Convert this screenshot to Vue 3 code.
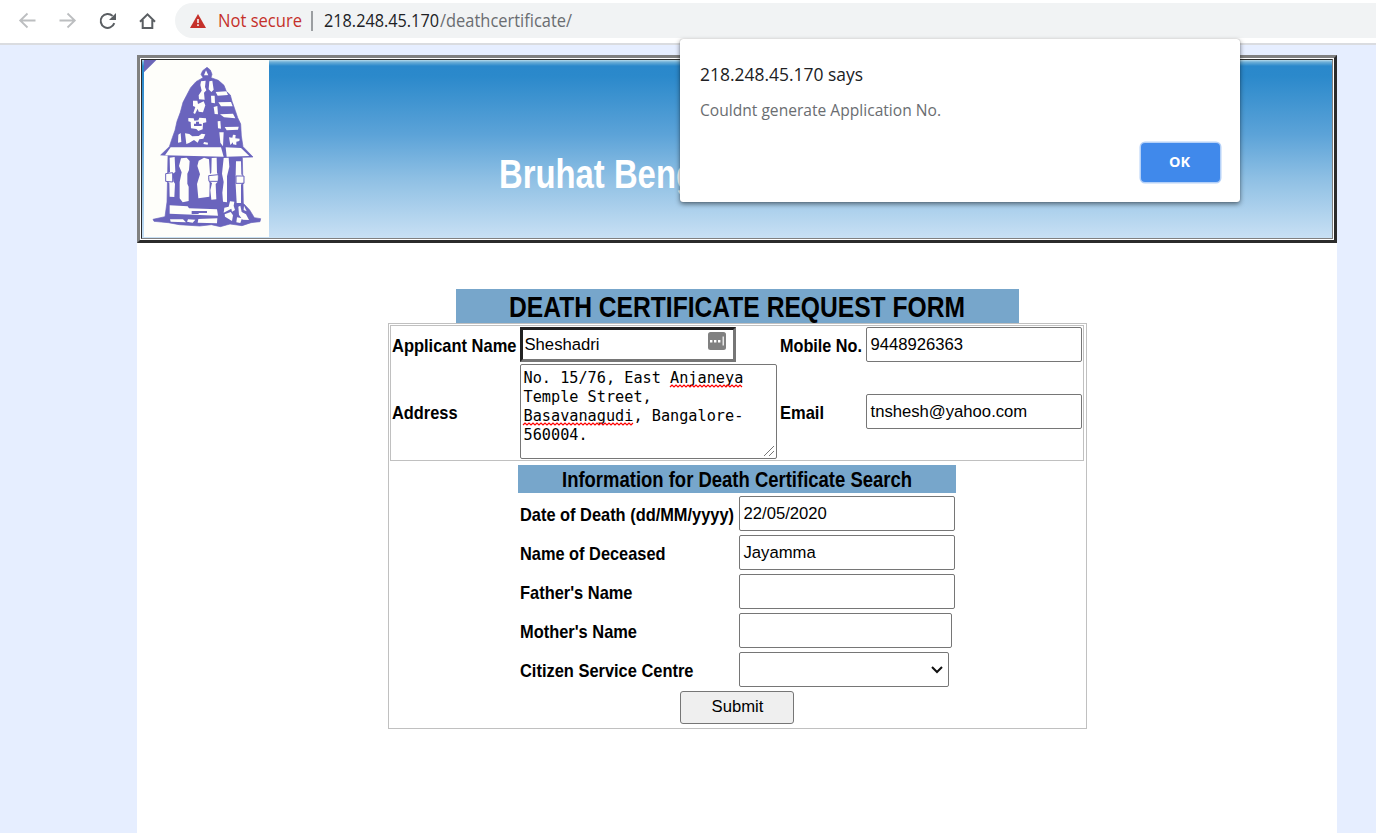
<script setup>
import { h } from 'vue'

// One line of text fitted to a fixed advance width; k condenses the glyphs.
const Fit = (props) => {
  const k = props.k || 1
  return h('svg', { width: props.w, height: props.ht }, [
    h('text', {
      x: 0,
      y: props.y,
      fill: 'currentColor',
      transform: `scale(${k} 1)`,
      textLength: props.w / k,
      lengthAdjust: 'spacingAndGlyphs',
    }, props.t),
  ])
}
Fit.props = ['t', 'w', 'ht', 'y', 'k']

const zigzag = (x, y, w) => {
  let d = `M${x} ${y}`
  for (let i = 2, up = true; i <= w; i += 2, up = !up) d += ` L${x + i} ${up ? y - 2 : y}`
  return d
}

const addressLines = [
  { t: 'No. 15/76, East Anjaneya', y: 18 },
  { t: 'Temple Street,', y: 37 },
  { t: 'Basavanagudi, Bangalore-', y: 56 },
  { t: '560004.', y: 75 },
]

const rows = [
  { label: 'Date of Death (dd/MM/yyyy)', w: 214, value: '22/05/2020', cls: '' },
  { label: 'Name of Deceased', w: 145.5, value: 'Jayamma', cls: '' },
  { label: "Father's Name", w: 112.5, value: '', cls: '' },
  { label: "Mother's Name", w: 117, value: '', cls: 'mother' },
]
</script>

<template>
  <div class="screen">
    <header class="toolbar">
      <nav class="nav">
        <svg class="faded" width="20" height="20" viewBox="0 0 20 20"><path d="M18.5 9.5H3M10.5 2.5L3.2 9.5L10.5 16.5" /></svg>
        <svg class="faded" width="20" height="20" viewBox="0 0 20 20"><path d="M2.5 9.5H17.5M10.5 2.5L17.8 9.5L10.5 16.5" /></svg>
        <svg width="20" height="20" viewBox="0 0 20 20"><path d="M17.3 12.2A7 7 0 1 1 15.6 4.9" /><path class="solid" d="M19 2V9H12Z" /></svg>
        <svg width="20" height="20" viewBox="0 0 20 20"><path d="M3 10.7L10.5 3.4L18 10.7M5.7 9V17H15.3V9" /></svg>
      </nav>
      <div class="omnibox">
        <svg class="warn" width="16" height="14" viewBox="0 0 16 14"><path fill="#c5302a" d="M8 0L16 14H0Z" /><path fill="#f1f3f4" d="M7.2 5H8.8V9H7.2ZM7.2 10.3H8.8V12H7.2Z" /></svg>
        <Fit class="ui url insecure" t="Not secure" :w="84" :ht="35" :y="24" />
        <span class="divider"></span>
        <Fit class="ui url host" t="218.248.45.170" :w="115" :ht="35" :y="24" />
        <Fit class="ui url path" t="/deathcertificate/" :w="132" :ht="35" :y="24" />
      </div>
    </header>

    <main class="page">
      <section class="banner">
        <div class="banner-cell">
          <svg class="temple" width="125" height="177" viewBox="27 30 375 531" preserveAspectRatio="none">
            <rect x="27" y="30" width="375" height="531" fill="#fefefa" />
            <path fill="#6b66b8" d="M27 30H64L27 67Z" />
            <g fill="#6a64bd" stroke="#6a64bd" stroke-width="2" stroke-linejoin="round">
              <path d="M204 83L198 73L203 62L216 52L226 60L231 73L228 83L250 91L267 106L274 124L286 135L291 154L301 182L308 203L317 222L319 258L324 290L354 321L322 322L325 460L344 480L358 503L377 506L375 515L348 518L321 527L285 522L256 530L229 524L194 528L133 524L100 518L57 514L54 508L90 500L96 456L99 316L77 315L103 290L112 263L120 241L126 214L136 187L144 157L155 136L167 113L183 95Z" />
            </g>
            <g fill="#fefefa">
              <path d="M207 76L213 61L220 76ZM198 94L212 92L210 111L214 121L207 128L209 149L192 148L191 136L200 122L196 105ZM223 94L232 92L236 119L229 126L221 118ZM228 137L239 137L240 160L229 158ZM236 171L247 168L249 193L239 192ZM248 214L256 213L258 236L249 235ZM253 247L266 247L264 289L256 278Z" />
              <path d="M242 126L274 124L279 135L248 137ZM250 157L288 156L293 169L258 169ZM255 193L294 191L301 205L267 202ZM269 231L311 230L309 239L275 241Z" />
              <path d="M174 152L187 152L189 162L206 154L211 166L204 187L191 185L188 176L180 192L175 189L181 171L174 168ZM160 204L176 205L178 212L190 211L193 203L213 205L214 217L204 219L203 238L190 243L184 237L168 235L167 216L160 214ZM150 250L163 252L172 259L191 258L200 251L211 253L205 266L193 268L188 278L177 270L162 279L154 282ZM130 254L137 249L139 276L129 278ZM207 276L219 278L218 284L205 282ZM282 262L292 263L294 254L302 255L301 265L314 266L313 273L304 275L304 285L294 283V277L286 285Z" />
              <path d="M107 292H258L266 320L90 316ZM272 292L318 294L343 318L275 320Z" />
              <path d="M104 323L119 321L121 366L113 371L115 394L120 401L118 441L104 440L103 398L92 392L95 371L105 366ZM138 325L155 323L164 333L162 360L157 371V401L161 410V453L143 457L134 445V396L140 367L132 348ZM191 332L207 323L222 328L225 373L219 384L224 400L223 440L190 445L186 402L195 373L187 348ZM230 324L245 323L246 369L252 379L248 395L242 402L244 448L229 449L226 421L231 399L222 393L219 379L229 368ZM266 324L281 323L283 350L276 379V457L264 455L262 428L266 396L261 371ZM303 334H318L319 373L326 382L325 396L318 404V459H305L302 404V373Z" />
              <path d="M104 466L158 469L162 475L246 478L249 497L104 491ZM105 508L144 508L153 517L107 515ZM159 508L181 509L173 518L156 515ZM190 507L247 505L246 520L188 518ZM268 473L281 470L285 454L298 455L296 467L300 480L291 485L289 476L266 488ZM269 493L287 486L294 496L291 513L270 500ZM310 470L316 467L320 486L333 493L342 510L323 509L312 495ZM306 502L321 505L316 519L304 517ZM327 467L335 484L326 480Z" />
            </g>
            <path fill="#6a64bd" d="M170 483H216V489H191V492H170ZM183 215H192V221L200 222V228H177V221H183Z" />
            <path fill="none" stroke="#6a64bd" stroke-width="3" d="M92 371L113 368V396L92 394ZM221 377L250 374V394H222ZM303 378H327V400H303Z" />
          </svg>
          <div class="banner-title">
            <Fit class="narrow heading" t="Bruhat Bengaluru Mahanagara Palike" :w="582" :k="0.82" :ht="50" :y="38" />
          </div>
        </div>
      </section>

      <section class="form-area">
        <h1 class="form-title"><Fit class="narrow form-heading" t="DEATH CERTIFICATE REQUEST FORM" :w="456" :k="0.82" :ht="34" :y="27.8" /></h1>
        <div class="outer">
          <div class="applicant">
            <Fit class="narrow label" t="Applicant Name" :w="124.5" :k="0.82" :ht="35" :y="24.7" />
            <div class="field focused">
              <span>Sheshadri</span>
              <svg width="18" height="18" viewBox="0 0 18 18"><rect width="18" height="18" rx="2.5" fill="#808080" /><path fill="#fff" d="M2 8H4.4V10.4H2ZM6 8H8.4V10.4H6ZM10 8H12.4V10.4H10ZM14.6 4.5H15.8V13.5H14.6Z" /></svg>
            </div>
            <Fit class="narrow label" t="Mobile No." :w="82" :k="0.82" :ht="35" :y="24.7" />
            <div class="field">9448926363</div>
            <Fit class="narrow label" t="Address" :w="65.5" :k="0.82" :ht="35" :y="24.7" />
            <div class="textarea">
              <svg class="mono" width="255" height="93">
                <text
                  v-for="line in addressLines"
                  :key="line.y"
                  x="2.5"
                  :y="line.y"
                  :textLength="line.t.length * 9.16"
                  lengthAdjust="spacingAndGlyphs"
                >{{ line.t }}</text>
                <path class="squiggle" :d="zigzag(149, 22, 73)" />
                <path class="squiggle" :d="zigzag(2, 60, 110)" />
                <path class="grip" d="M243 91L253 81M248 91L253 86" />
              </svg>
            </div>
            <Fit class="narrow label" t="Email" :w="44" :k="0.82" :ht="35" :y="24.7" />
            <div class="field">tnshesh@yahoo.com</div>
          </div>

          <div class="search">
            <h2 class="search-title"><Fit class="narrow sub-heading" t="Information for Death Certificate Search" :w="350" :k="0.82" :ht="28" :y="21.6" /></h2>
            <div v-for="row in rows" :key="row.label" class="row">
              <div class="row-label"><Fit class="narrow label" :t="row.label" :w="row.w" :k="0.82" :ht="35" :y="24.7" /></div>
              <div class="field" :class="row.cls">{{ row.value }}</div>
            </div>
            <div class="row">
              <div class="row-label"><Fit class="narrow label" t="Citizen Service Centre" :w="173.5" :k="0.82" :ht="35" :y="24.7" /></div>
              <div class="field select">
                <svg width="12" height="8" viewBox="0 0 12 8"><path d="M1 1L6 6L11 1" /></svg>
              </div>
            </div>
          </div>
          <button class="submit">Submit</button>
        </div>
      </section>
    </main>

    <div class="dialog">
      <Fit class="ui dialog-title" t="218.248.45.170 says" :w="163" :ht="24" :y="18" />
      <Fit class="ui dialog-text" t="Couldnt generate Application No." :w="241" :ht="22" :y="17" />
      <button class="ok"><Fit class="ui ok-text" t="OK" :w="21" :ht="20" :y="15" /></button>
    </div>
  </div>
</template>

<style>
body {
  margin: 0;
  background: #e6eeff;
}
</style>

<style scoped>
.screen {
  position: relative;
  display: flex;
  flex-direction: column;
  width: 1376px;
  height: 833px;
  overflow: hidden;
  background: #e6eeff;
  font-family: "Liberation Sans", Arial, sans-serif;
  color: #000;
}
svg {
  display: block;
  flex: none;
  overflow: visible;
}
.toolbar {
  box-sizing: border-box;
  display: flex;
  height: 45px;
  padding: 3px 0 0 17px;
  border-bottom: 2px solid #dadce0;
  background: #fff;
  flex: none;
}
.nav {
  display: flex;
  gap: 20px;
  width: 158px;
  padding-top: 8px;
}
.nav path {
  fill: none;
  stroke: #5a5e62;
  stroke-width: 2;
}
.nav .faded path {
  stroke: #bcbec0;
  stroke-width: 1.8;
}
.nav .solid {
  fill: #5a5e62;
  stroke: none;
}
.omnibox {
  flex: 1;
  display: flex;
  height: 35px;
  padding-left: 15px;
  border-radius: 18px 0 0 18px;
  background: #f1f3f4;
}
.warn {
  margin: 11px 12px 0 0;
}
.ui {
  font-family: "Open Sans", "Noto Sans", sans-serif;
}
.url {
  font-size: 18px;
}
.insecure {
  color: #c5302a;
}
.divider {
  width: 2px;
  height: 20px;
  margin: 8px 11px 0 9px;
  background: #9b9ea1;
}
.host {
  color: #202124;
}
.path {
  margin-left: 1px;
  color: #6a6d71;
}
.page {
  display: flex;
  flex-direction: column;
  flex: 1;
  width: 1200px;
  margin: 10px auto 0 137px;
  background: #fff;
}
.banner {
  box-sizing: border-box;
  height: 188px;
  padding: 1px;
  border: 3px solid;
  border-color: #808080 #2b2b2b #2b2b2b #808080;
  flex: none;
}
.banner-cell {
  box-sizing: border-box;
  display: flex;
  height: 180px;
  padding-left: 2px;
  border: 1px solid;
  border-color: #2b2b2b #808080 #808080 #2b2b2b;
  background: linear-gradient(#b9dcec 0, #6fb0d8 2px, #2a88cb 6px, #2b89cb 16px, #5ca3d8 42%, #8fc0e4 67%, #c8e0f4 100%);
}
.temple {
  overflow: hidden;
}
.banner-title {
  padding: 90px 0 0 230px;
}
.narrow {
  font-family: "Liberation Sans Narrow", "Liberation Sans", Arial, sans-serif;
  font-weight: 700;
}
.heading {
  color: #fff;
  font-size: 40px;
}
.form-area {
  display: flex;
  flex-direction: column;
  align-items: center;
  width: 1200px;
  padding-top: 46px;
}
.form-title,
.search-title {
  display: flex;
  justify-content: center;
  margin: 0;
  background: #77a6cb;
}
.form-title {
  width: 563px;
  height: 34px;
}
.form-heading {
  font-size: 29px;
}
.sub-heading {
  font-size: 21.5px;
}
.label {
  font-size: 18px;
}
.outer {
  box-sizing: border-box;
  display: flex;
  flex-direction: column;
  width: 699px;
  height: 406px;
  padding: 1px;
  border: 1px solid #c0c0c0;
}
.applicant {
  box-sizing: border-box;
  display: grid;
  grid-template-columns: 128px 260px 86px 216px;
  grid-template-rows: 35px 95px;
  row-gap: 2px;
  align-items: center;
  width: 694px;
  height: 136px;
  padding: 1px 0 0 1px;
  border: 1px solid #c0c0c0;
}
.field {
  box-sizing: border-box;
  display: flex;
  align-items: center;
  width: 216px;
  height: 35px;
  padding: 0 3px 0 4px;
  border: 1px solid #767676;
  border-radius: 2px;
  background: #fff;
  font-size: 16.67px;
  line-height: 19px;
}
.field.focused {
  justify-content: space-between;
  padding: 0 7px 0 2px;
  border: 3px solid;
  border-color: #222 #767676 #767676 #222;
  border-radius: 0;
}
.field.focused svg {
  margin-bottom: 7px;
}
.textarea {
  box-sizing: border-box;
  width: 257px;
  height: 95px;
  border: 1px solid #767676;
  border-radius: 2px;
  background: #fff;
}
.mono {
  font-family: "DejaVu Sans Mono", monospace;
  font-size: 15px;
}
.squiggle {
  fill: none;
  stroke: #f00;
  stroke-width: 1.2;
}
.grip {
  fill: none;
  stroke: #777;
  stroke-width: 1;
}
.search {
  display: flex;
  flex-direction: column;
  width: 438px;
  margin: 4px 0 0 128px;
}
.search-title {
  height: 28px;
  margin-bottom: 3px;
}
.row {
  display: flex;
  margin-bottom: 4px;
}
.row-label {
  box-sizing: border-box;
  width: 221px;
  padding-left: 2px;
}
.field.mother {
  width: 213px;
}
.field.select {
  justify-content: flex-end;
  width: 210px;
  padding: 1px 5px 0 0;
}
.select path {
  fill: none;
  stroke: #111;
  stroke-width: 2;
}
.submit {
  box-sizing: border-box;
  width: 114px;
  height: 33px;
  margin-left: 290px;
  padding: 0 0 2px 2px;
  border: 1px solid #767676;
  border-radius: 3px;
  background: #efefef;
  font: 16.67px "Liberation Sans", Arial, sans-serif;
  color: #000;
}
.dialog {
  position: absolute;
  left: 680px;
  top: 39px;
  box-sizing: border-box;
  display: flex;
  flex-direction: column;
  width: 560px;
  height: 163px;
  padding: 24px 19px 19px 20px;
  border-radius: 3px;
  background: #fff;
  box-shadow: 0 0 1px rgba(0, 0, 0, 0.4), 0 2px 5px rgba(0, 0, 0, 0.5);
}
.dialog-title {
  font-size: 17.5px;
  color: #202124;
}
.dialog-text {
  margin-top: 12px;
  font-size: 15.5px;
  color: #6a6d71;
}
.ok {
  display: flex;
  align-items: center;
  justify-content: center;
  width: 79px;
  height: 39px;
  margin: 22px 1.5px 0 auto;
  padding: 0;
  border: 0;
  border-radius: 4px;
  background: #4089eb;
  box-shadow: 0 0 0 1.5px #b5d1f8;
}
.ok-text {
  margin: 0 2px 1px 0;
  color: #fff;
  font-size: 15px;
  font-weight: 700;
}
</style>
